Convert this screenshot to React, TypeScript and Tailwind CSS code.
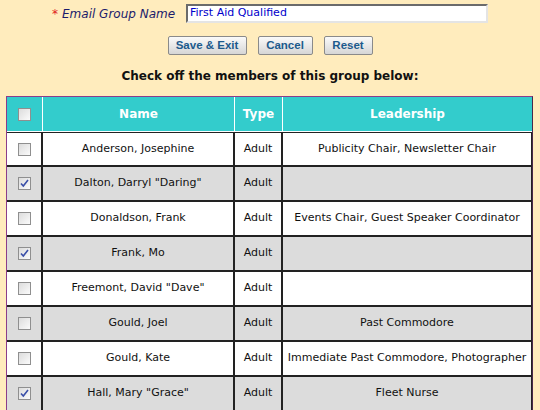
import React from "react";

const members = [
  { name: "Anderson, Josephine", type: "Adult", lead: "Publicity Chair, Newsletter Chair", on: false },
  { name: 'Dalton, Darryl "Daring"', type: "Adult", lead: "", on: true },
  { name: "Donaldson, Frank", type: "Adult", lead: "Events Chair, Guest Speaker Coordinator", on: false },
  { name: "Frank, Mo", type: "Adult", lead: "", on: true },
  { name: 'Freemont, David "Dave"', type: "Adult", lead: "", on: false },
  { name: "Gould, Joel", type: "Adult", lead: "Past Commodore", on: false },
  { name: "Gould, Kate", type: "Adult", lead: "Immediate Past Commodore, Photographer", on: false },
  { name: 'Hall, Mary "Grace"', type: "Adult", lead: "Fleet Nurse", on: true },
];

function Box({ checked }: { checked: boolean }) {
  return (
    <div className="w-[13px] h-[13px] border border-[#8f8f8f] bg-gradient-to-br from-[#dcdcdc] to-[#fbfbfb] flex items-center justify-center">
      {checked && (
        <svg width="9" height="9" viewBox="0 0 9 9">
          <path d="M1 4.5 L3.3 7 L8 1" fill="none" stroke="#3a4fa8" strokeWidth="1.6" />
        </svg>
      )}
    </div>
  );
}

function Btn({ label, w }: { label: string; w: string }) {
  return (
    <button className={`${w} h-[19px] border border-[#8a8a8a] rounded-[2px] bg-gradient-to-b from-[#fafafa] to-[#d6d6d6] text-[#1c5a8c] font-bold text-[11.5px] leading-none font-['Liberation_Sans',Arial,sans-serif]`}>
      {label}
    </button>
  );
}

export default function App() {
  return (
    <div className="w-[540px] h-[410px] overflow-hidden bg-[#ffecbd] font-['DejaVu_Sans',Verdana,sans-serif] text-[#111]">
      <div className="flex items-center h-[26px] pt-[1px]">
        <div className="ml-[52px] w-[134px] text-[12px] italic text-[#1b1b6b]">
          <span className="text-[#e02020] mr-[4px]">*</span>Email Group Name
        </div>
        <div className="w-[302px] h-[19px] border-2 border-t-[#6b6b6b] border-l-[#6b6b6b] border-b-[#e4e4e4] border-r-[#e4e4e4] bg-white flex items-center pl-[2px] text-[11px] text-[#0000cc]">
          First Aid Qualified
        </div>
      </div>
      <div className="flex justify-center gap-[11px] mt-[10px]">
        <Btn label="Save & Exit" w="w-[79px]" />
        <Btn label="Cancel" w="w-[55px]" />
        <Btn label="Reset" w="w-[49px]" />
      </div>
      <div className="text-center font-bold text-[12px] mt-[14px] h-[15px] leading-[15px]">
        Check off the members of this group below:
      </div>
      <div className="ml-[6px] mt-[12px] w-[527px] border border-t-[#8b3d8b] border-l-[#8b3d8b] border-r-[#4a2a4a] border-b-[#4a2a4a]">
        <div className="grid grid-cols-[36px_192px_48px_1fr]">
          <div className="h-[35px] bg-[#33cccc] border-r border-b border-white flex items-center justify-center">
            <Box checked={false} />
          </div>
          <div className="h-[35px] bg-[#33cccc] border-r border-b border-white flex items-center justify-center text-white font-bold text-[12px]">
            Name
          </div>
          <div className="h-[35px] bg-[#33cccc] border-r border-b border-white flex items-center justify-center text-white font-bold text-[12px]">
            Type
          </div>
          <div className="h-[35px] bg-[#33cccc] border-b border-white flex items-center justify-center text-white font-bold text-[12px]">
            Leadership
          </div>
          {members.map((m, i) => {
            const bg = i % 2 === 0 ? "bg-white" : "bg-[#dcdcdc]";
            const top = i === 0 ? "border-t border-t-[#222]" : "";
            return (
              <React.Fragment key={m.name}>
                <div className={`h-[35px] ${bg} ${top} border-r-2 border-b-2 border-[#222] flex items-center justify-center`}>
                  <Box checked={m.on} />
                </div>
                <div className={`h-[35px] ${bg} ${top} border-r-2 border-b-2 border-[#222] flex items-center justify-center text-[11px]`}>
                  {m.name}
                </div>
                <div className={`h-[35px] ${bg} ${top} border-r-2 border-b-2 border-[#222] flex items-center justify-center text-[11px]`}>
                  {m.type}
                </div>
                <div className={`h-[35px] ${bg} ${top} border-r border-b-2 border-[#222] flex items-center justify-center text-[11px] whitespace-nowrap`}>
                  {m.lead}
                </div>
              </React.Fragment>
            );
          })}
        </div>
      </div>
    </div>
  );
}
